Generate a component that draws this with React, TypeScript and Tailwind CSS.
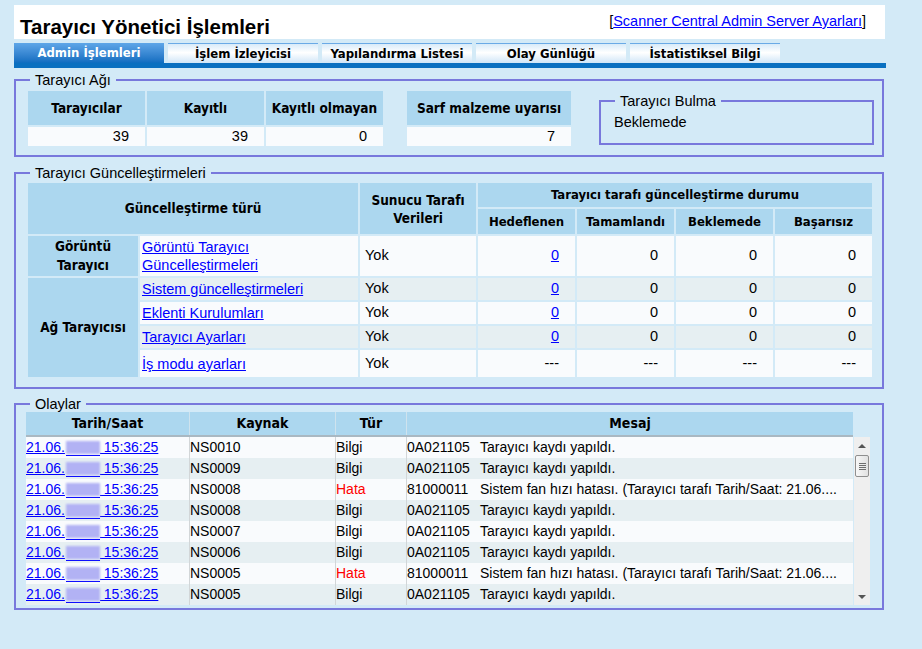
import React from "react";

type Ev = { src: string; type: "Bilgi" | "Hata"; code: string; msg: string };

const OK = "Tarayıcı kaydı yapıldı.";
const FAN = "Sistem fan hızı hatası. (Tarayıcı tarafı Tarih/Saat: 21.06....";

const events: Ev[] = [
  { src: "NS0010", type: "Bilgi", code: "0A021105", msg: OK },
  { src: "NS0009", type: "Bilgi", code: "0A021105", msg: OK },
  { src: "NS0008", type: "Hata", code: "81000011", msg: FAN },
  { src: "NS0008", type: "Bilgi", code: "0A021105", msg: OK },
  { src: "NS0007", type: "Bilgi", code: "0A021105", msg: OK },
  { src: "NS0006", type: "Bilgi", code: "0A021105", msg: OK },
  { src: "NS0005", type: "Hata", code: "81000011", msg: FAN },
  { src: "NS0005", type: "Bilgi", code: "0A021105", msg: OK },
];

const tabs = ["Admin İşlemleri", "İşlem İzleyicisi", "Yapılandırma Listesi", "Olay Günlüğü", "İstatistiksel Bilgi"];

function Header() {
  return (
    <div className="flex h-[34px] w-[871px] justify-between bg-white">
      <h1 className="ml-[6px] self-end text-[20.5px] font-bold leading-[24px]">Tarayıcı Yönetici İşlemleri</h1>
      <div className="mr-[19px] mt-[8px] text-[14.5px] leading-[16px]">
        [<a href="#" className="text-[#0000ff] underline">Scanner Central Admin Server Ayarları</a>]
      </div>
    </div>
  );
}

function Tabs() {
  return (
    <div className="mt-[4px] w-[872px]">
      <div className="flex h-[20px] gap-[4px]">
        {tabs.map((t, i) =>
          i === 0 ? (
            <div
              key={t}
              className="flex w-[150px] items-center justify-center bg-linear-to-b from-[#5ea6e8] to-[#0d6dc0] font-['DejaVu_Sans_Condensed','DejaVu_Sans',sans-serif] text-[13px] font-bold text-white"
            >
              {t}
            </div>
          ) : (
            <div
              key={t}
              className="flex w-[150px] items-center justify-center border-t border-[#6aaae6] bg-linear-to-b from-[#d8ebf9] via-white via-45% to-[#d0e6f7] font-['DejaVu_Sans_Condensed','DejaVu_Sans',sans-serif] text-[13px] font-bold text-black"
            >
              {t}
            </div>
          )
        )}
      </div>
      <div className="h-[5px] bg-[#0a70c0]" />
    </div>
  );
}

function NetworkSection() {
  const hd = "flex items-center justify-center bg-[#acd7ef] font-['DejaVu_Sans_Condensed','DejaVu_Sans',sans-serif] text-[13.5px] font-bold";
  const dt = "flex items-center justify-end bg-[#f9fbfd] pr-[16px] text-[14.5px]";
  return (
    <fieldset className="mt-[4px] w-[870px] border-2 border-[#7878dc] pb-[9px] pl-[12px] pt-[3px]">
      <legend className="ml-[2px] px-[5px] text-[14.5px] leading-[16px]">Tarayıcı Ağı</legend>
      <div className="flex items-start">
        <div className="grid grid-cols-[117px_117px_117px] grid-rows-[34px_19px] gap-[2px]">
          <div className={hd}>Tarayıcılar</div>
          <div className={hd}>Kayıtlı</div>
          <div className={hd}>Kayıtlı olmayan</div>
          <div className={dt}>39</div>
          <div className={dt}>39</div>
          <div className={dt}>0</div>
        </div>
        <div className="ml-[24px] grid grid-cols-[164px] grid-rows-[34px_19px] gap-[2px]">
          <div className={hd}>Sarf malzeme uyarısı</div>
          <div className={dt}>7</div>
        </div>
        <fieldset className="ml-[28px] mt-[2px] w-[275px] border-2 border-[#7878dc] pb-[13px] pl-[13px] pt-[5px]">
          <legend className="ml-[1px] px-[5px] text-[14.5px] leading-[16px]">Tarayıcı Bulma</legend>
          <div className="text-[14.5px] leading-[16px]">Beklemede</div>
        </fieldset>
      </div>
    </fieldset>
  );
}

type URow = { label: React.ReactNode; h: string; gray: boolean; target: boolean };

function UpdatesSection() {
  const thBase = "bg-[#acd7ef] p-0 text-center align-middle font-['DejaVu_Sans_Condensed','DejaVu_Sans',sans-serif] font-bold";
  const th = thBase + " text-[13px]";
  const thL = thBase + " text-[13.5px]";
  const rows: URow[] = [
    { label: <>Görüntü Tarayıcı<br />Güncelleştirmeleri</>, h: "h-[40px]", gray: false, target: true },
    { label: "Sistem güncelleştirmeleri", h: "h-[22px]", gray: true, target: true },
    { label: "Eklenti Kurulumları", h: "h-[22px]", gray: false, target: true },
    { label: "Tarayıcı Ayarları", h: "h-[22px]", gray: true, target: true },
    { label: "İş modu ayarları", h: "h-[27px]", gray: false, target: false },
  ];
  return (
    <fieldset className="mt-[8px] w-[870px] border-2 border-[#7878dc] pb-[8px] pl-[10px]">
      <legend className="ml-[4px] px-[5px] text-[14.5px] leading-[16px]">Tarayıcı Güncelleştirmeleri</legend>
      <table className="w-[848px] table-fixed border-separate border-spacing-[2px] text-[14.5px]">
        <colgroup>
          <col className="w-[110px]" />
          <col className="w-[218px]" />
          <col className="w-[116px]" />
          <col className="w-[97px]" />
          <col className="w-[97px]" />
          <col className="w-[97px]" />
          <col className="w-[97px]" />
        </colgroup>
        <thead>
          <tr className="h-[24px]">
            <th colSpan={2} rowSpan={2} className={thL}>Güncelleştirme türü</th>
            <th rowSpan={2} className={thL + " leading-[18px]"}>Sunucu Tarafı<br />Verileri</th>
            <th colSpan={4} className={th}>Tarayıcı tarafı güncelleştirme durumu</th>
          </tr>
          <tr className="h-[25px]">
            <th className={th}>Hedeflenen</th>
            <th className={th}>Tamamlandı</th>
            <th className={th}>Beklemede</th>
            <th className={th}>Başarısız</th>
          </tr>
        </thead>
        <tbody>
          {rows.map((r, i) => {
            const bg = r.gray ? "bg-[#e6eff2]" : "bg-[#f9fbfd]";
            const num = "p-0 pr-[16px] text-right align-middle " + bg;
            return (
              <tr key={i} className={r.h}>
                {i === 0 && (
                  <th className={thL + " leading-[19px]"}>Görüntü<br />Tarayıcı</th>
                )}
                {i === 1 && (
                  <th rowSpan={4} className={thL}>Ağ Tarayıcısı</th>
                )}
                <td className={"p-0 pl-[2px] align-middle leading-[18px] " + bg}>
                  <a href="#" className="text-[#0000ff] underline">{r.label}</a>
                </td>
                <td className={"p-0 pl-[5px] align-middle " + bg}>Yok</td>
                <td className={num}>
                  {r.target ? <a href="#" className="text-[#0000ff] underline">0</a> : "---"}
                </td>
                <td className={num}>{r.target ? "0" : "---"}</td>
                <td className={num}>{r.target ? "0" : "---"}</td>
                <td className={num}>{r.target ? "0" : "---"}</td>
              </tr>
            );
          })}
        </tbody>
      </table>
    </fieldset>
  );
}

function Blob() {
  return (
    <span className="ml-[1px] inline-flex w-[34px] flex-col align-middle">
      <span className="h-[13px] bg-[#b2b2f4] blur-[1px]" />
      <span className="mt-[1px] h-px bg-[#0000ff]" />
    </span>
  );
}

function Scrollbar() {
  return (
    <div className="ml-[1px] flex h-[168px] w-[16px] flex-col items-center bg-[#efefef]">
      <div className="flex h-[17px] items-center justify-center">
        <div className="h-0 w-0 border-x-[4px] border-b-[4px] border-x-transparent border-b-[#555]" />
      </div>
      <div className="mt-[1px] flex h-[22px] w-[14px] flex-col items-center justify-center gap-[1px] rounded-[2px] border border-[#8f8f8f] bg-linear-to-r from-[#f7f7f7] to-[#e2e2e2]">
        <div className="h-px w-[7px] bg-[#6f6f6f]" />
        <div className="h-px w-[7px] bg-[#6f6f6f]" />
        <div className="h-px w-[7px] bg-[#6f6f6f]" />
        <div className="h-px w-[7px] bg-[#6f6f6f]" />
      </div>
      <div className="flex-1" />
      <div className="flex h-[17px] items-center justify-center">
        <div className="h-0 w-0 border-x-[4px] border-t-[4px] border-x-transparent border-t-[#555]" />
      </div>
    </div>
  );
}

function EventsSection() {
  const hc = "flex items-center justify-center font-['DejaVu_Sans_Condensed','DejaVu_Sans',sans-serif] text-[14px] font-bold";
  return (
    <fieldset className="mt-[7px] w-[870px] border-2 border-[#7878dc] pb-[3px] pl-[10px]">
      <legend className="ml-[4px] px-[5px] text-[14.5px] leading-[16px]">Olaylar</legend>
      <div className="flex h-[25px] w-[827px] border-b-2 border-[#a9b8c2] bg-[#acd7ef]">
        <div className={hc + " w-[163px]"}>Tarih/Saat</div>
        <div className={hc + " w-[146px] border-l border-[#cfe3ee]"}>Kaynak</div>
        <div className={hc + " w-[71px] border-l border-[#cfe3ee]"}>Tür</div>
        <div className={hc + " w-[447px] border-l border-[#cfe3ee]"}>Mesaj</div>
      </div>
      <div className="flex">
        <div className="w-[827px] text-[14px]">
          {events.map((e, i) => (
            <div key={i} className={"flex h-[21px] items-center " + (i % 2 === 0 ? "bg-[#f9fbfd]" : "bg-[#e6eff2]")}>
              <div className="flex h-full w-[163px] items-center whitespace-nowrap">
                <a href="#" className="text-[#0000ff] underline">
                  21.06.<Blob /> 15:36:25
                </a>
              </div>
              <div className="flex h-full w-[146px] items-center border-l border-[#d2d6d8]">{e.src}</div>
              <div className={"flex h-full w-[71px] items-center border-l border-[#d2d6d8] " + (e.type === "Hata" ? "text-[#ff0000]" : "")}>
                {e.type}
              </div>
              <div className="flex h-full w-[447px] items-center overflow-hidden whitespace-nowrap border-l border-[#d2d6d8]">
                <span className="inline-block w-[73px]">{e.code}</span>
                <span>{e.msg}</span>
              </div>
            </div>
          ))}
        </div>
        <Scrollbar />
      </div>
    </fieldset>
  );
}

export default function App() {
  return (
    <div className="min-h-[649px] w-[922px] bg-[#d3eaf7] pl-[14px] pt-[5px] font-['Liberation_Sans',Arial,sans-serif] text-black">
      <Header />
      <Tabs />
      <NetworkSection />
      <UpdatesSection />
      <EventsSection />
    </div>
  );
}
